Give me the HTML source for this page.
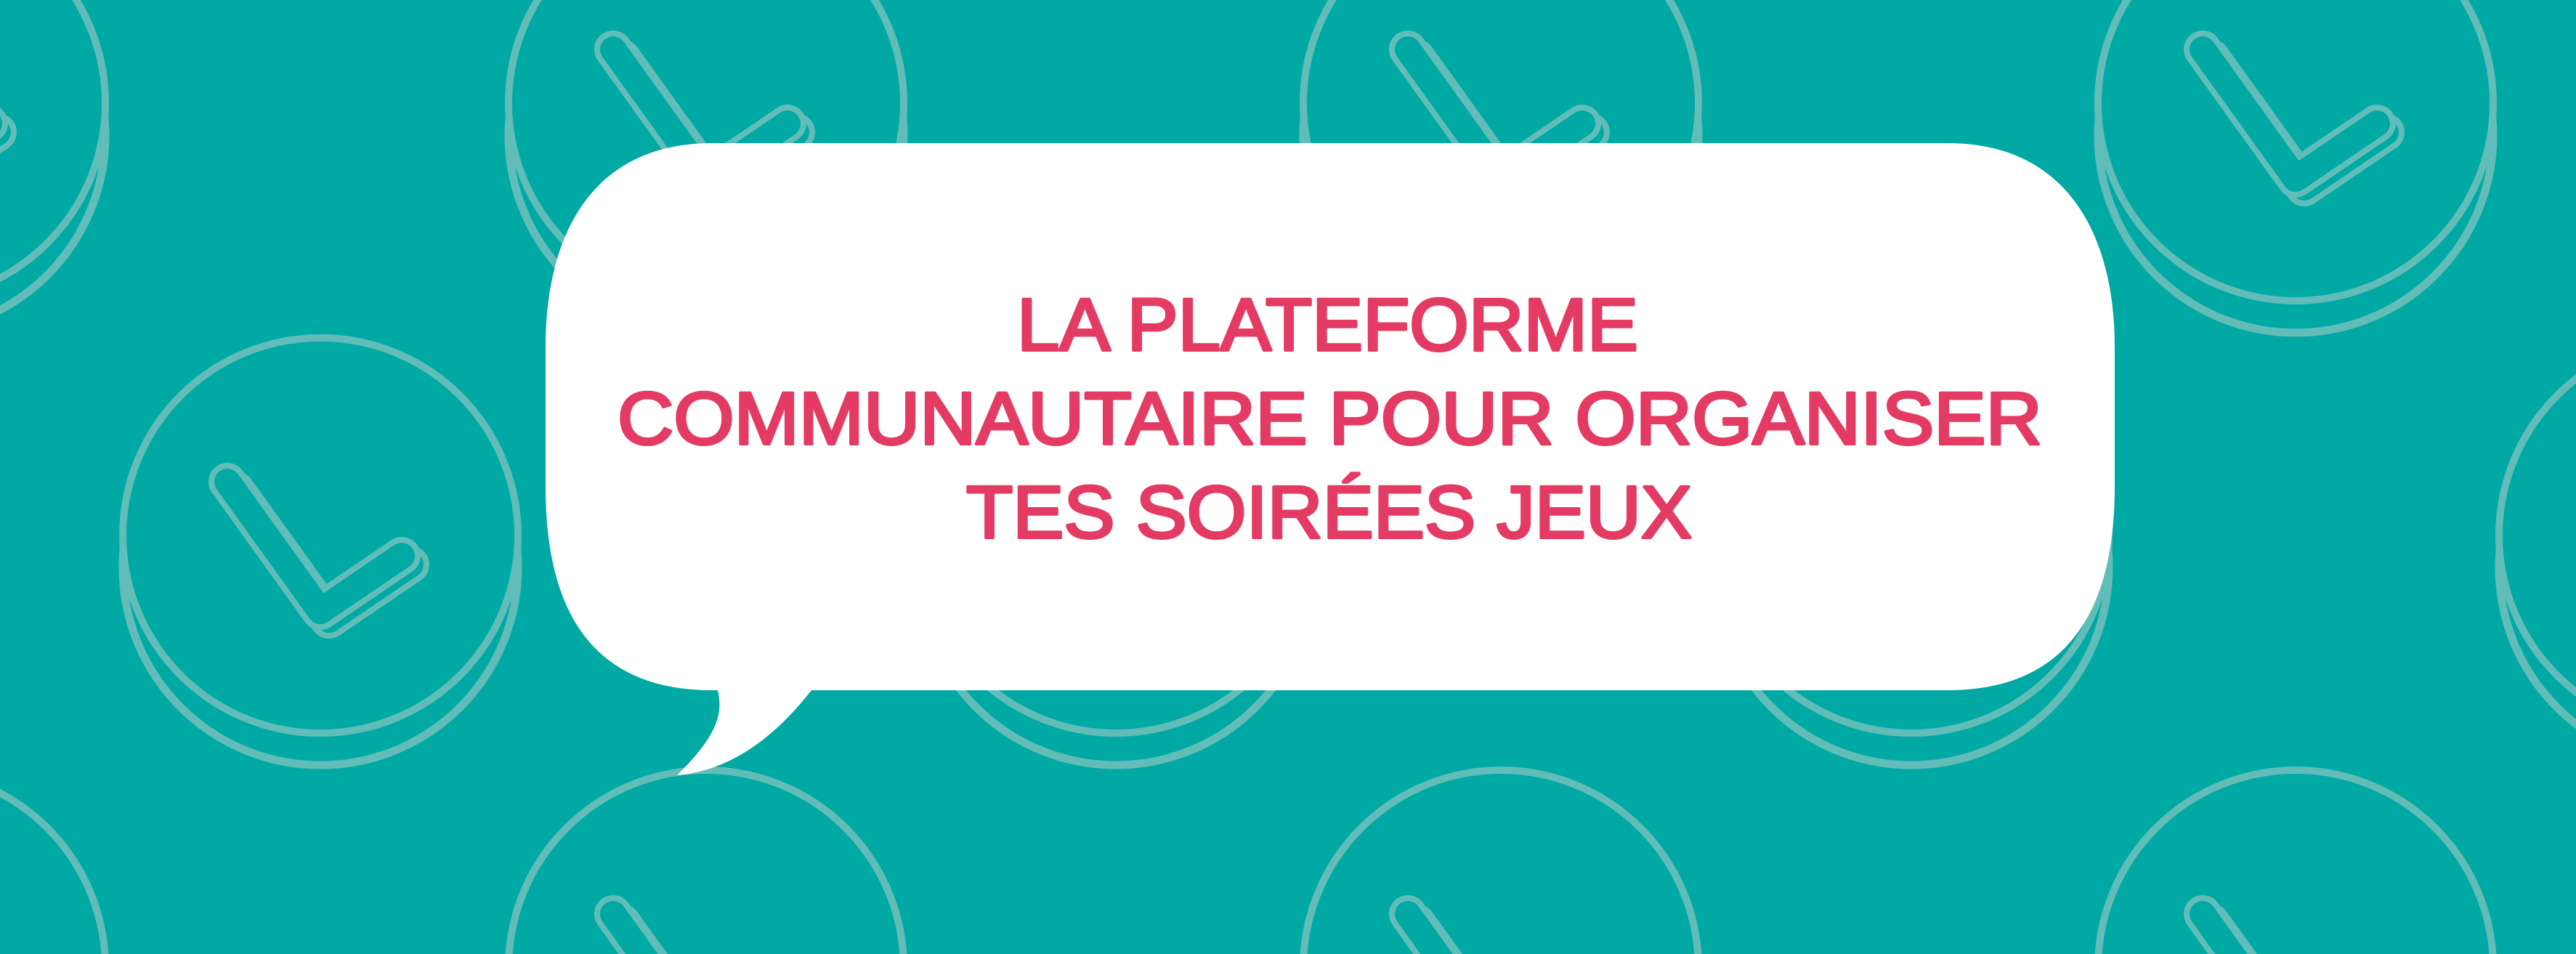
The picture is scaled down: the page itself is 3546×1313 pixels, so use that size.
<!DOCTYPE html>
<html><head><meta charset="utf-8"><style>html,body{margin:0;padding:0;background:#00A9A4;overflow:hidden;width:3546px;height:1313px}svg{display:block;overflow:hidden}</style></head>
<body>
<svg width="3546" height="1313" viewBox="0 0 3546 1313" xmlns="http://www.w3.org/2000/svg">
<defs>
<g id="coin">
  <circle cx="0" cy="44" r="272" fill="#00A9A4" stroke="#62BDB9" stroke-width="11"/>
  <circle cx="0" cy="0" r="272" fill="#00A9A4" stroke="#62BDB9" stroke-width="10"/>
  <path d="M-116 -62 L12 116 L124 40" fill="none" stroke="#62BDB9" stroke-width="52" stroke-linecap="round" stroke-linejoin="round"/>
  <path d="M-116 -62 L12 116 L124 40" fill="none" stroke="#00A9A4" stroke-width="36" stroke-linecap="round" stroke-linejoin="round"/>
  <path d="M-128 -74 L0 104 L112 28" fill="none" stroke="#62BDB9" stroke-width="52" stroke-linecap="round" stroke-linejoin="round"/>
  <path d="M-128 -74 L0 104 L112 28" fill="none" stroke="#00A9A4" stroke-width="36" stroke-linecap="round" stroke-linejoin="round"/>
</g>
</defs>
<rect width="3546" height="1313" fill="#00A9A4"/>
<use href="#coin" x="-127" y="142"/>
<use href="#coin" x="972" y="142"/>
<use href="#coin" x="2066" y="142"/>
<use href="#coin" x="3160" y="142"/>
<use href="#coin" x="441" y="737"/>
<use href="#coin" x="1536" y="737"/>
<use href="#coin" x="2631" y="737"/>
<use href="#coin" x="3712" y="737"/>
<use href="#coin" x="-127" y="1332"/>
<use href="#coin" x="972" y="1332"/>
<use href="#coin" x="2066" y="1332"/>
<use href="#coin" x="3160" y="1332"/>
<path d="M981 197 H2681 C2850 197 2911 330 2911 477 V670 C2911 860 2830 950 2681 950 H1117 C1070 1010 1010 1060 932 1067 C990 1010 995 980 988 950 H981 C830 950 751 860 751 670 V477 C751 330 810 197 981 197 Z" fill="#ffffff"/>
<g font-family="Liberation Sans, sans-serif" font-weight="normal" font-size="102" fill="#E33B63" stroke="#E33B63" stroke-width="4" stroke-linejoin="round">
  <text x="1400" y="482" textLength="855" lengthAdjust="spacingAndGlyphs">LA PLATEFORME</text>
  <text x="850" y="611" textLength="1961" lengthAdjust="spacingAndGlyphs">COMMUNAUTAIRE POUR ORGANISER</text>
  <text x="1330" y="740" textLength="999" lengthAdjust="spacingAndGlyphs">TES SOIRÉES JEUX</text>
</g>
</svg>
</body></html>
